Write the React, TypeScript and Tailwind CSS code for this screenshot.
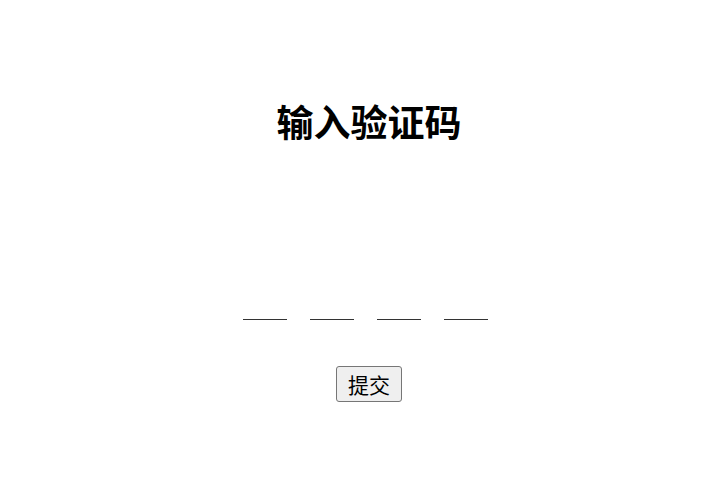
import React, { useRef, useState } from 'react';

const CODE_LENGTH = 4;

export default function App() {
  const [code, setCode] = useState<string[]>(Array(CODE_LENGTH).fill(''));
  const inputs = useRef<(HTMLInputElement | null)[]>([]);

  const handleChange = (index: number, value: string) => {
    const next = [...code];
    next[index] = value.slice(-1);
    setCode(next);
    if (value && index < CODE_LENGTH - 1) {
      inputs.current[index + 1]?.focus();
    }
  };

  return (
    <main className="min-h-screen bg-white pt-24 pl-7 font-['Noto_Sans_CJK_SC',sans-serif] text-black">
      <form className="flex flex-col items-center" onSubmit={(e) => e.preventDefault()}>
        <h1 className="text-[37px] leading-[50px] font-bold">输入验证码</h1>
        <div className="mt-[134px] flex gap-[23px] pr-[7px]">
          {code.map((digit, index) => (
            <input
              key={index}
              ref={(el) => {
                inputs.current[index] = el;
              }}
              type="text"
              inputMode="numeric"
              aria-label={`验证码第 ${index + 1} 位`}
              value={digit}
              onChange={(e) => handleChange(index, e.target.value)}
              className="h-10 w-11 border-b border-[#333333] text-center text-xl outline-none"
            />
          ))}
        </div>
        <button
          type="submit"
          className="mt-[46px] h-9 w-[66px] rounded-[3px] border border-[#767676] bg-[#efefef] text-[21px] leading-8"
        >
          提交
        </button>
      </form>
    </main>
  );
}
